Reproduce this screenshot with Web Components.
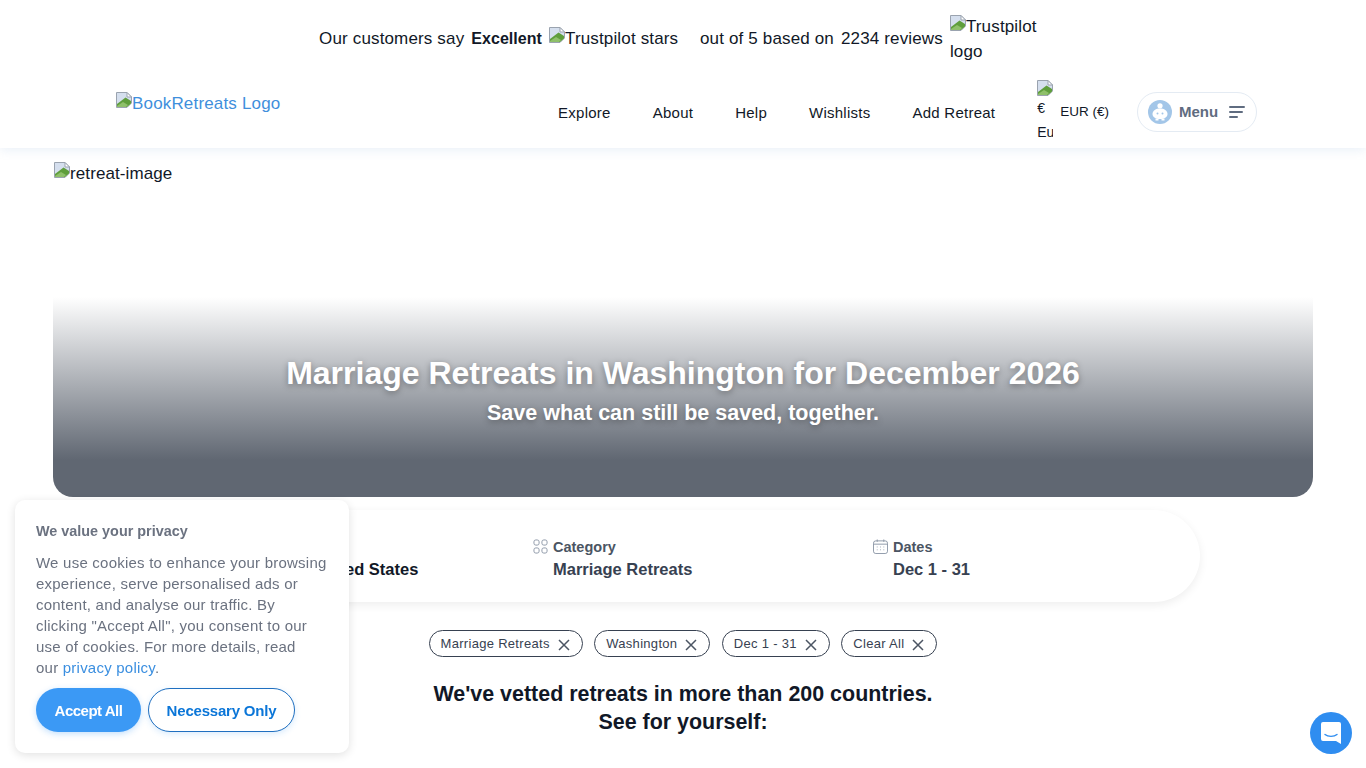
<!DOCTYPE html>
<html lang="en">
<head>
<meta charset="utf-8">
<title>Marriage Retreats in Washington</title>
<style>
    html, body { margin: 0; padding: 0; height: 768px; overflow: hidden; background: #fff; }
    body { font-family: "Liberation Sans", Arial, sans-serif; color: #111827; }
</style>
</head>
<body>
<site-header></site-header>
<retreat-hero></retreat-hero>
<search-summary></search-summary>
<chip-row></chip-row>
<vetted-note></vetted-note>
<cookie-banner></cookie-banner>
<chat-launcher></chat-launcher>

<script>
// the little torn page a browser shows for a picture that did not load
const tornPage = `<svg class="torn" viewBox="0 0 16 16">
    <path d="M.5 .5H11L15.5 5V11L11 15.5H.5Z" fill="#d5dfee" stroke="#9aa3af"/>
    <path d="M11 .5V5H15.5Z" fill="#fff" stroke="#9aa3af"/>
    <path d="M1 15V12L9.5 5.5 15 9V11.5L11 15Z" fill="#5f9e3c"/>
    <path d="M1 15V14L7 10 12 13 10 15Z" fill="#8fc06a"/>
</svg>`;

class brokenImage extends HTMLElement {
    constructor() {
        super();
        this.attachShadow({ mode: 'open' });
    }

    connectedCallback() {
        this.shadowRoot.innerHTML = `<style>
            :host { display: inline; }
            svg { width: 16px; height: 16px; vertical-align: 1px; }
        </style>
        ${tornPage}<slot></slot>`;
    }
}
customElements.define('broken-image', brokenImage);

class siteHeader extends HTMLElement {
    constructor() {
        super();
        this.attachShadow({ mode: 'open' });
    }

    connectedCallback() {
        this.shadowRoot.innerHTML = `<style>
            :host {
                display: block;
                height: 148px;
                background: #fff;
                box-shadow: 0 2px 10px rgba(120, 160, 210, .16);
                position: relative;
            }
            .trust {
                height: 77px;
                display: flex;
                justify-content: center;
                align-items: center;
                gap: 7px;
                font-size: 17px;
                letter-spacing: .15px;
                color: #111827;
                padding-right: 5px;
            }
            .trust b { font-size: 16px; font-weight: 700; letter-spacing: .05px; }
            .stars { width: 144px; white-space: nowrap; margin-top: -2px; }
            .logo { width: 92px; line-height: 25px; margin-top: 1px; }
            nav {
                height: 71px;
                display: flex;
                align-items: flex-start;
                justify-content: space-between;
                padding: 0 109px 0 116px;
            }
            .brand { color: #3f8fdc; font-size: 17px; letter-spacing: .17px; margin-top: 15px; line-height: 24px; }
            .links { display: flex; align-items: center; font-size: 15px; letter-spacing: .25px; height: 71px; margin-top: -1px; }
            .links a { color: #111827; margin-right: 42px; padding-top: 2px; }
            .cur { display: flex; align-items: center; font-size: 13.5px; letter-spacing: 0; }
            .flag { width: 16px; font-size: 14px; line-height: 24px; overflow: hidden; margin-right: 7px; }
            .flag svg { width: 16px; height: 16px; display: block; }
            .menu {
                margin-left: 28px;
                width: 120px;
                height: 40px;
                box-sizing: border-box;
                border: 1px solid #e4ebf3;
                border-radius: 20px;
                display: flex;
                align-items: center;
                padding-left: 10px;
                font-size: 15px;
                letter-spacing: 0;
                font-weight: 700;
                color: #5f6c80;
            }
            .menu span { margin: 0 11px 0 7px; }
        </style>
        <div class="trust">
            <span>Our customers say</span>
            <b>Excellent</b>
            <span class="stars"><broken-image>Trustpilot stars</broken-image></span>
            <span>out of 5 based on</span>
            <span>2234 reviews</span>
            <span class="logo"><broken-image>Trustpilot logo</broken-image></span>
        </div>
        <nav>
            <div class="brand"><broken-image>BookRetreats Logo</broken-image></div>
            <div class="links">
                <a>Explore</a><a>About</a><a>Help</a><a>Wishlists</a><a>Add Retreat</a>
                <div class="cur">
                    <div class="flag">${tornPage}€<br>Eu</div>
                    <span>EUR (€)</span>
                </div>
                <div class="menu">
                    <svg width="24" height="24" viewBox="0 0 24 24">
                        <circle cx="12" cy="12" r="12" fill="#a3c6e8"/>
                        <circle cx="12" cy="5.8" r="2.6" fill="#fff"/>
                        <path d="M4.5 14C4.5 10.5 8 8.5 12 8.5S19.5 10.5 19.5 14 16 19 12 19 4.5 17.5 4.5 14Z" fill="#fff"/>
                        <path d="M7.5 18.5h3v2h-3zM13.5 18.5h3v2h-3z" fill="#fff"/>
                        <circle cx="9.5" cy="13.5" r="1" fill="#a3c6e8"/>
                        <circle cx="14.5" cy="13.5" r="1" fill="#a3c6e8"/>
                    </svg>
                    <span>Menu</span>
                    <svg width="16" height="14" viewBox="0 0 16 14" fill="none" stroke="#5f6c80" stroke-width="2" stroke-linecap="round">
                        <path d="M1 2h14M1 7h12M1 12h7"/>
                    </svg>
                </div>
            </div>
        </nav>`;
    }
}
customElements.define('site-header', siteHeader);

class retreatHero extends HTMLElement {
    constructor() {
        super();
        this.attachShadow({ mode: 'open' });
    }

    connectedCallback() {
        this.shadowRoot.innerHTML = `<style>
            :host {
                display: block;
                position: relative;
                height: 349px;
                margin: 0 53px;
                font-size: 17px;
                letter-spacing: .1px;
                color: #111827;
            }
            .alt { padding: 14px 0 0 1px; line-height: 20px; }
            .shade {
                position: absolute;
                left: 0; right: 0; bottom: 0;
                height: 200px;
                border-radius: 0 0 20px 20px;
                background: linear-gradient(to bottom, rgba(96, 103, 114, 0) 0, rgba(96, 103, 114, 1) 163px);
                color: #fff;
                text-align: center;
                letter-spacing: 0;
                text-shadow: 0 2px 6px rgba(0, 0, 0, .35);
            }
            h1 { margin: 56px 0 0; font-size: 32px; line-height: 40px; font-weight: 700; }
            p { margin: 0; font-size: 21.5px; line-height: 40px; font-weight: 700; }
        </style>
        <div class="alt"><broken-image>retreat-image</broken-image></div>
        <div class="shade">
            <h1>Marriage Retreats in Washington for December 2026</h1>
            <p>Save what can still be saved, together.</p>
        </div>`;
    }
}
customElements.define('retreat-hero', retreatHero);

class searchSummary extends HTMLElement {
    constructor() {
        super();
        this.attachShadow({ mode: 'open' });
    }

    field(label, value, icon) {
        return `<div class="field">
            <div class="label">${icon}<span>${label}</span></div>
            <div class="value">${value}</div>
        </div>`;
    }

    connectedCallback() {
        const pin = `<svg viewBox="0 0 16 16" fill="none" stroke="#8b95a5"><path d="M8 15S3 9.8 3 6a5 5 0 0 1 10 0C13 9.8 8 15 8 15Z"/><circle cx="8" cy="6" r="1.8"/></svg>`;
        const grid = `<svg viewBox="0 0 16 16" fill="none" stroke="#8b95a5"><rect x="1" y="1" width="5.5" height="5.5" rx="2"/><rect x="9.5" y="1" width="5.5" height="5.5" rx="2"/><rect x="1" y="9.5" width="5.5" height="5.5" rx="2"/><rect x="9.5" y="9.5" width="5.5" height="5.5" rx="2"/></svg>`;
        const cal = `<svg viewBox="0 0 16 16" fill="none" stroke="#8b95a5"><rect x=".5" y="2" width="15" height="13.5" rx="2.5"/><path d="M.5 5.5h15M4.5 .5v2.5M11.5 .5v2.5"/><path d="M4 8.5h1M7.5 8.5h1M11 8.5h1M4 11.5h1M7.5 11.5h1M11 11.5h1" stroke-width=".8"/></svg>`;
        this.shadowRoot.innerHTML = `<style>
            :host {
                display: grid;
                grid-template-columns: 340px 340px 1fr;
                align-items: center;
                height: 92px;
                box-sizing: border-box;
                margin: 13px 166px 0;
                padding: 4px 0 0 27px;
                border-radius: 46px;
                background: #fff;
                box-shadow: 0 3px 10px rgba(0, 0, 0, .07);
            }
            .label {
                display: flex;
                align-items: center;
                gap: 5px;
                font-size: 14.5px;
                font-weight: 700;
                color: #4b5563;
                line-height: 20px;
            }
            .label svg { width: 15px; height: 15px; }
            .value {
                margin: 1px 0 0 20px;
                font-size: 16.5px;
                line-height: 22px;
                font-weight: 700;
                color: #374151;
            }
            .first .value { color: #111827; margin-left: 17px; }
        </style>
        <div class="first">${this.field('Location', 'Washington, United States', pin)}</div>
        ${this.field('Category', 'Marriage Retreats', grid)}
        ${this.field('Dates', 'Dec 1 - 31', cal)}`;
    }
}
customElements.define('search-summary', searchSummary);

class filterChip extends HTMLElement {
    constructor() {
        super();
        this.attachShadow({ mode: 'open' });
    }

    connectedCallback() {
        this.shadowRoot.innerHTML = `<style>
            :host {
                display: inline-flex;
                align-items: center;
                gap: 8px;
                height: 27px;
                box-sizing: border-box;
                padding: 0 12px 0 11px;
                border: 1px solid #374151;
                border-radius: 14px;
                font-size: 13px;
                letter-spacing: .3px;
                color: #374151;
            }
            svg { width: 12px; height: 12px; margin-top: 2px; }
        </style>
        <slot></slot>
        <svg viewBox="0 0 12 12" fill="none" stroke="#4b5563" stroke-width="1.5"><path d="M1 1l10 10M11 1L1 11"/></svg>`;
    }
}
customElements.define('filter-chip', filterChip);

class chipRow extends HTMLElement {
    constructor() {
        super();
        this.attachShadow({ mode: 'open' });
    }

    connectedCallback() {
        this.shadowRoot.innerHTML = `<style>
            :host {
                display: flex;
                justify-content: center;
                gap: 11.5px;
                margin-top: 28px;
            }
        </style>
        <filter-chip>Marriage Retreats</filter-chip>
        <filter-chip>Washington</filter-chip>
        <filter-chip>Dec 1 - 31</filter-chip>
        <filter-chip>Clear All</filter-chip>`;
    }
}
customElements.define('chip-row', chipRow);

class vettedNote extends HTMLElement {
    constructor() {
        super();
        this.attachShadow({ mode: 'open' });
    }

    connectedCallback() {
        this.shadowRoot.innerHTML = `<style>
            :host {
                display: block;
                margin-top: 23px;
                text-align: center;
                font-size: 21.45px;
                line-height: 28px;
                font-weight: 700;
                color: #111827;
            }
        </style>
        We've vetted retreats in more than 200 countries.<br>See for yourself:`;
    }
}
customElements.define('vetted-note', vettedNote);

class cookieBanner extends HTMLElement {
    constructor() {
        super();
        this.attachShadow({ mode: 'open' });
    }

    connectedCallback() {
        this.shadowRoot.innerHTML = `<style>
            :host {
                position: fixed;
                left: 15px;
                top: 500px;
                width: 334px;
                height: 253px;
                box-sizing: border-box;
                padding: 21px 21px 0;
                background: #fff;
                border-radius: 10px;
                box-shadow: 0 2px 10px rgba(0, 0, 0, .12);
                color: #6b7280;
            }
            h2 { margin: 0 0 11px; font-size: 14.4px; line-height: 20px; font-weight: 700; }
            p { margin: 0 0 10px; font-size: 15px; line-height: 21px; letter-spacing: .23px; }
            a { color: #3b8fe0; }
            div { display: flex; gap: 7px; }
            button {
                height: 44px;
                border-radius: 22px;
                font: 700 15px "Liberation Sans", Arial, sans-serif;
                letter-spacing: -.2px;
                padding: 0;
            }
            .yes {
                width: 105px;
                background: #3b99f5;
                border: 0;
                color: #fff;
                letter-spacing: -.5px;
                box-shadow: 0 2px 6px rgba(59, 153, 245, .3);
            }
            .no {
                width: 147px;
                background: #fff;
                border: 1px solid #1f6fc0;
                color: #0b76d8;
                box-shadow: 0 2px 6px rgba(59, 153, 245, .2);
            }
        </style>
        <h2>We value your privacy</h2>
        <p>We use cookies to enhance your browsing experience, serve personalised ads or content, and analyse our traffic. By clicking "Accept All", you consent to our use of cookies. For more details, read<br>our <a>privacy policy</a>.</p>
        <div><button class="yes">Accept All</button><button class="no">Necessary Only</button></div>`;
    }
}
customElements.define('cookie-banner', cookieBanner);

class chatLauncher extends HTMLElement {
    constructor() {
        super();
        this.attachShadow({ mode: 'open' });
    }

    connectedCallback() {
        this.shadowRoot.innerHTML = `<style>
            :host {
                position: fixed;
                left: 1310px;
                top: 712px;
                width: 42px;
                height: 42px;
                border-radius: 50%;
                background: #2f8df0;
                display: flex;
                align-items: center;
                justify-content: center;
            }
        </style>
        <svg width="22" height="24" viewBox="0 0 22 24">
            <path d="M3 1H19A2 2 0 0 1 21 3V23L16 20H3A2 2 0 0 1 1 18V3A2 2 0 0 1 3 1Z" fill="#fff"/>
            <path d="M5 13.5C8 16 14 16 17 13.5" fill="none" stroke="#2f8df0" stroke-width="1.4" stroke-linecap="round"/>
        </svg>`;
    }
}
customElements.define('chat-launcher', chatLauncher);
</script>
</body>
</html>
